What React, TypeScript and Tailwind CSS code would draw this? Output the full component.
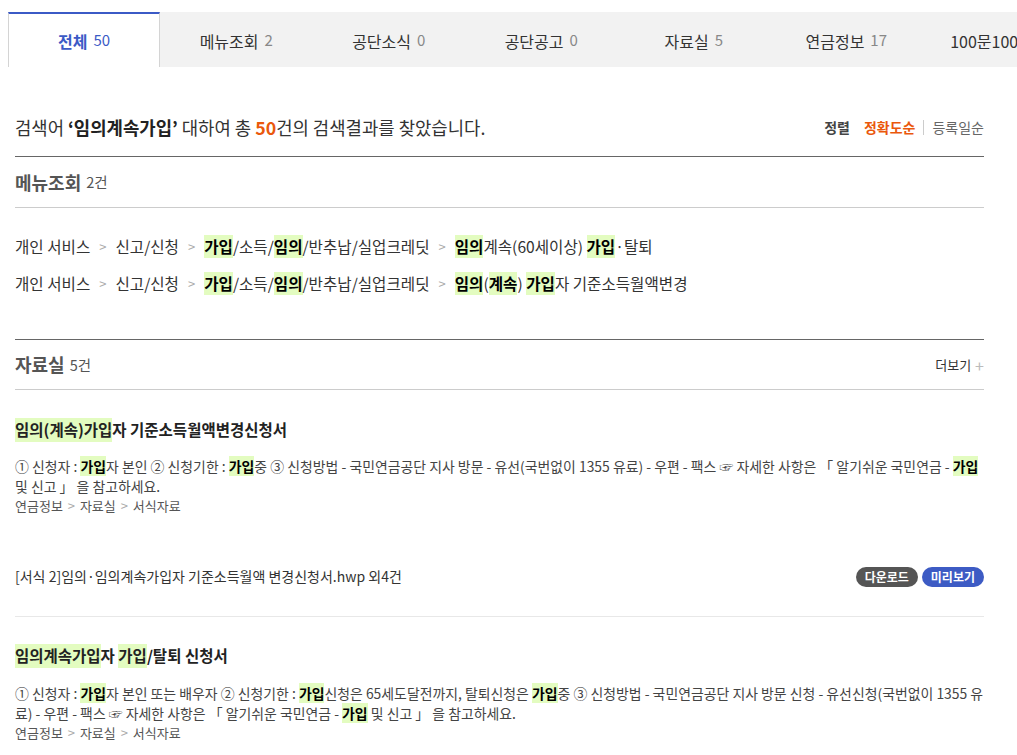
import React from "react";

const font = { fontFamily: '"Noto Sans CJK KR", "Noto Sans", sans-serif' };

function H({ children }: { children: React.ReactNode }) {
  return <span className="bg-[#e3fcc0] font-bold text-black">{children}</span>;
}

const tabs = [
  ["전체", "50"],
  ["메뉴조회", "2"],
  ["공단소식", "0"],
  ["공단공고", "0"],
  ["자료실", "5"],
  ["연금정보", "17"],
  ["100문100답", "0"],
  ["기타", "0"],
];

function Crumb() {
  return <span className="mx-[9px] text-[#aaa] text-[13px]">&gt;</span>;
}

export default function App() {
  return (
    <div className="w-[1017px] h-[755px] overflow-hidden bg-white text-[#333]" style={font}>
      <div className="pt-[12px] pl-[8px] overflow-hidden">
        <div className="flex w-[1300px]">
          {tabs.map(([n, c], i) =>
            i === 0 ? (
              <div
                key={n}
                className="w-[152px] h-[55px] shrink-0 flex items-center justify-center bg-white border-t-2 border-t-[#3b5ac6] border-l border-r border-[#d4d4d4] text-[16px] text-[#3b5ac6] font-bold"
              >
                {n} <span className="ml-[6px] font-normal text-[15px]">{c}</span>
              </div>
            ) : (
              <div
                key={n}
                className="w-[152.5px] h-[55px] shrink-0 flex items-center justify-center bg-[#f2f2f2] text-[16px] text-[#333] pt-[2px]"
              >
                {n} <span className="ml-[6px] text-[15px] text-[#888]">{c}</span>
              </div>
            )
          )}
        </div>
      </div>

      <div className="mx-[15px] w-[969px]">
        <div className="flex items-center justify-between h-[90px] pt-[32px] border-b border-[#666]">
          <div className="text-[17.8px] text-[#333]">
            검색어 <b className="text-[#222]">‘임의계속가입’</b> 대하여 총{" "}
            <b className="text-[#ea580c]">50</b>건의 검색결과를 찾았습니다.
          </div>
          <div className="flex items-center text-[14px]">
            <b className="text-[#444] mr-[14px]">정렬</b>
            <b className="text-[#ea580c]">정확도순</b>
            <span className="mx-[8px] w-px h-[15px] bg-[#ccc]" />
            <span className="text-[#666]">등록일순</span>
          </div>
        </div>

        <div className="h-[51px] flex items-center border-b border-[#ccc]">
          <b className="text-[18px] text-[#555]">메뉴조회</b>
          <span className="ml-[5px] text-[14.5px] text-[#555]">2건</span>
        </div>

        <div className="pt-[20px] pb-[37px] text-[15.6px] text-[#333] border-b border-[#666]">
          <div className="h-[37px] flex items-center">
            개인 서비스<Crumb />신고/신청<Crumb />
            <H>가입</H>/소득/<H>임의</H>/반추납/실업크레딧<Crumb />
            <H>임의</H>계속(60세이상)&nbsp;<H>가입</H>·탈퇴
          </div>
          <div className="h-[37px] flex items-center">
            개인 서비스<Crumb />신고/신청<Crumb />
            <H>가입</H>/소득/<H>임의</H>/반추납/실업크레딧<Crumb />
            <H>임의</H>(<H>계속</H>)&nbsp;<H>가입</H>자 기준소득월액변경
          </div>
        </div>

        <div className="h-[50px] flex items-center justify-between border-b border-[#ccc]">
          <div className="flex items-center">
            <b className="text-[18px] text-[#555]">자료실</b>
            <span className="ml-[5px] text-[14.5px] text-[#555]">5건</span>
          </div>
          <div className="flex items-center text-[13px] text-[#333]">
            더보기
            <span className="ml-[4px] text-[#bbb] text-[16px] leading-none">+</span>
          </div>
        </div>

        <div className="pt-[29px] pb-[29px] border-b border-[#e8e8e8]">
          <div className="text-[15.5px] font-bold text-[#222] h-[22px] flex items-center">
            <span className="bg-[#e3fcc0]">임의(</span>
            <span className="bg-[#e3fcc0]">계속</span>
            <span className="bg-[#e3fcc0]">)가입</span>자 기준소득월액변경신청서
          </div>
          <div className="mt-[15px] text-[13.9px] leading-[20px] text-[#444] break-all">
            ① 신청자 : <H>가입</H>자 본인 ② 신청기한 : <H>가입</H>중 ③ 신청방법 - 국민연금공단 지사 방문 - 유선(국번없이 1355 유료) - 우편 - 팩스 ☞ 자세한 사항은 「 알기쉬운 국민연금 - <H>가입</H> 및 신고 」 을 참고하세요.
          </div>
          <div className="text-[13px] leading-[20px] text-[#555]">
            연금정보 <span className="text-[#aaa] mx-[2px]">&gt;</span> 자료실 <span className="text-[#aaa] mx-[2px]">&gt;</span> 서식자료
          </div>
          <div className="mt-[50px] flex items-center justify-between">
            <div className="text-[14px] text-[#333]">
              [서식 2]임의·임의계속가입자 기준소득월액 변경신청서.hwp 외4건
            </div>
            <div className="flex gap-[4px]">
              <span className="h-[20px] px-[9px] rounded-full bg-[#555] text-white text-[12px] font-bold flex items-center">다운로드</span>
              <span className="h-[20px] px-[9px] rounded-full bg-[#3d5bc4] text-white text-[12px] font-bold flex items-center">미리보기</span>
            </div>
          </div>
        </div>

        <div className="pt-[28px]">
          <div className="text-[15.5px] font-bold text-[#222] h-[22px] flex items-center">
            <span className="bg-[#e3fcc0]">임의계속가입</span>자&nbsp;<span className="bg-[#e3fcc0]">가입</span>/탈퇴 신청서
          </div>
          <div className="mt-[16px] text-[13.9px] leading-[20px] text-[#444] break-all">
            ① 신청자 : <H>가입</H>자 본인 또는 배우자 ② 신청기한 : <H>가입</H>신청은 65세도달전까지, 탈퇴신청은 <H>가입</H>중 ③ 신청방법 - 국민연금공단 지사 방문 신청 - 유선신청(국번없이 1355 유료) - 우편 - 팩스 ☞ 자세한 사항은 「 알기쉬운 국민연금 - <H>가입</H> 및 신고 」 을 참고하세요.
          </div>
          <div className="text-[13px] leading-[20px] text-[#555]">
            연금정보 <span className="text-[#aaa] mx-[2px]">&gt;</span> 자료실 <span className="text-[#aaa] mx-[2px]">&gt;</span> 서식자료
          </div>
        </div>
      </div>
    </div>
  );
}
